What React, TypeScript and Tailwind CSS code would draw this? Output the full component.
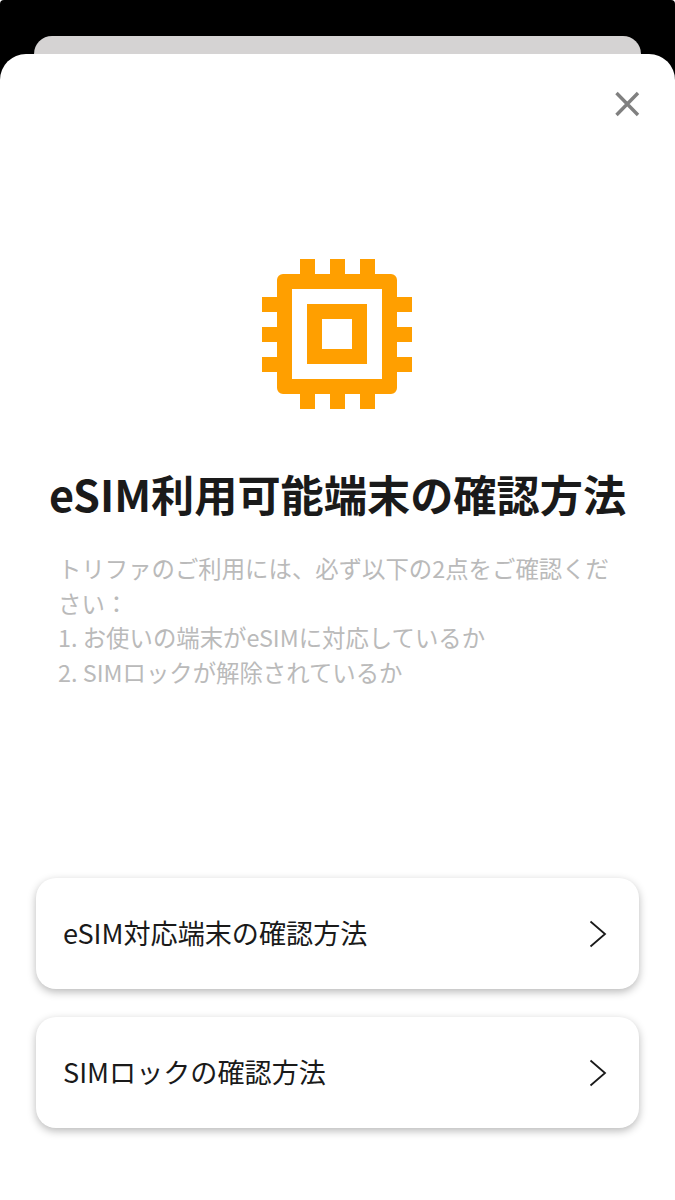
import React from "react";

const Chevron = () => (
  <svg width="20" height="28" viewBox="0 0 20 28" fill="none" className="shrink-0">
    <path d="M2.5 1.5L17 14L2.5 26.5" stroke="#1a1a1a" strokeWidth="1.8" />
  </svg>
);

const Chip = () => (
  <svg width="150" height="150" viewBox="0 0 150 150" fill="#ff9f00">
    <path
      fillRule="evenodd"
      d="M21 15H129A6 6 0 0 1 135 21V129A6 6 0 0 1 129 135H21A6 6 0 0 1 15 129V21A6 6 0 0 1 21 15ZM30 30V120H120V30ZM45 45H105V105H45ZM60 60V90H90V60Z"
    />
    <rect x="38" y="0" width="15" height="15" />
    <rect x="68" y="0" width="15" height="15" />
    <rect x="98" y="0" width="15" height="15" />
    <rect x="38" y="135" width="15" height="15" />
    <rect x="68" y="135" width="15" height="15" />
    <rect x="98" y="135" width="15" height="15" />
    <rect x="0" y="38" width="15" height="15" />
    <rect x="0" y="68" width="15" height="15" />
    <rect x="0" y="98" width="15" height="15" />
    <rect x="135" y="38" width="15" height="15" />
    <rect x="135" y="68" width="15" height="15" />
    <rect x="135" y="98" width="15" height="15" />
  </svg>
);

const Row = ({ label }: { label: string }) => (
  <div className="flex h-[111px] items-center justify-between rounded-[20px] bg-white pl-[27px] pr-[31px] shadow-[0_3px_8px_rgba(0,0,0,0.28)]">
    <span className="pb-[2px] text-[27.1px] leading-none text-[#1a1a1a]">{label}</span>
    <Chevron />
  </div>
);

export default function App() {
  return (
    <div
      className="flex h-[1200px] w-[675px] flex-col overflow-hidden rounded-t-[4px] bg-black pt-[36px]"
      style={{ fontFamily: '"Noto Sans CJK JP", "Noto Sans", sans-serif' }}
    >
      <div className="mx-[34px] h-[18px] shrink-0 rounded-t-[20px] bg-[#d5d3d3]" />
      <main className="flex flex-1 flex-col rounded-t-[26px] bg-white">
        <div className="flex justify-end pr-[35px] pt-[37px]">
          <svg width="26" height="26" viewBox="0 0 26 26" fill="none">
            <path d="M2.5 2L24 24M24 2L2.5 24" stroke="#808080" strokeWidth="3.4" />
          </svg>
        </div>
        <div className="flex justify-center pr-[1px] pt-[142px]">
          <Chip />
        </div>
        <h1 className="mt-[55px] text-center text-[43.2px] font-bold leading-[58px] text-[#1a1a1a]">
          eSIM利用可能端末の確認方法
        </h1>
        <p className="mt-[29px] px-[58px] text-[23.4px] leading-[34.5px] text-[#bababa]">
          トリファのご利用には、必ず以下の2点をご確認ください：
          <br />
          1. お使いの端末がeSIMに対応しているか
          <br />
          2. SIMロックが解除されているか
        </p>
        <div className="mt-auto flex flex-col gap-[28px] px-[36px] pb-[72px]">
          <Row label="eSIM対応端末の確認方法" />
          <Row label="SIMロックの確認方法" />
        </div>
      </main>
    </div>
  );
}
